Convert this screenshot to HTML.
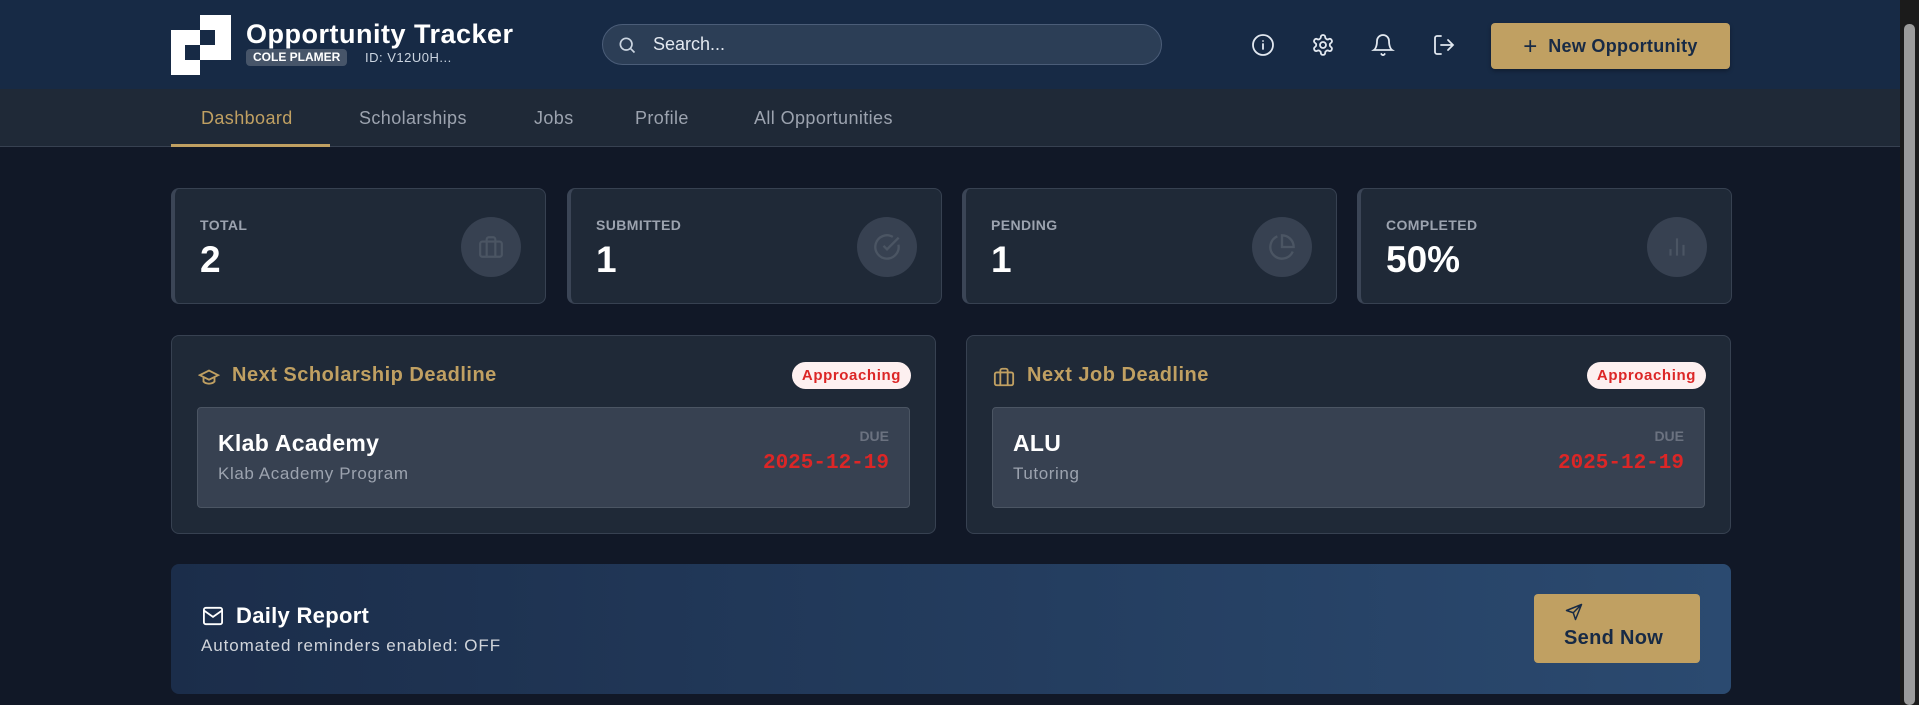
<!DOCTYPE html>
<html><head><meta charset="utf-8"><style>
*{box-sizing:border-box;margin:0;padding:0}
body{width:1919px;height:705px;overflow:hidden;background:#111827;font-family:"Liberation Sans",sans-serif;color:#fff;position:relative}
.abs{position:absolute}
.hdr{left:0;top:0;width:1900px;height:89px;background:#172a45}
.nav{left:0;top:89px;width:1900px;height:58px;background:#1f2937;border-bottom:1px solid #374151}
.sb{left:1900px;top:0;width:19px;height:705px;background:#1b1b1b}
.sb i{position:absolute;left:4px;top:24px;width:11px;height:681px;background:#9b9b9b;border-radius:5px}
.navi{top:108px;font-size:18px;color:#9ca3af;letter-spacing:.4px}
.card{background:#1f2937;border:1px solid #374151;border-radius:8px}
.stat{top:188px;width:375px;height:116px;border-left:4px solid #3b4556}
.stat .l{position:absolute;left:25px;top:28px;font-size:14px;font-weight:bold;color:#9ca3af;letter-spacing:.4px}
.stat .v{position:absolute;left:25px;top:50px;font-size:37px;font-weight:bold}
.stat .c{position:absolute;left:286px;top:28px;width:60px;height:60px;border-radius:50%;background:#374151;display:flex;align-items:center;justify-content:center}
.dl{top:335px;width:765px;height:199px}
.dl .t{position:absolute;left:60px;top:28px;font-size:20px;font-weight:bold;color:#c0a062;letter-spacing:.5px}
.dl .ic{position:absolute;left:26px;top:30px}
.badge{position:absolute;right:24px;top:26px;background:#fdf0f0;color:#dc2626;font-size:15px;font-weight:bold;padding:5px 10px;border-radius:14px;letter-spacing:.6px}
.inner{position:absolute;left:25px;top:71px;right:25px;height:101px;background:#374151;border:1px solid #4b5563;border-radius:4px}
.inner .n{position:absolute;left:20px;top:22px;font-size:23px;font-weight:bold;letter-spacing:.3px}
.inner .s{position:absolute;left:20px;top:56px;font-size:17px;color:#9ca3af;letter-spacing:.6px}
.inner .due{position:absolute;right:20px;top:20px;font-size:14px;font-weight:bold;color:#6b7280}
.inner .d{position:absolute;right:20px;top:44px;font-size:21px;font-weight:bold;color:#dc2626;font-family:"Liberation Mono",monospace}
</style></head><body>
<div class="abs hdr"></div>
<div class="abs nav"></div>
<div class="abs sb"><i></i></div>
<svg class="abs" style="left:171px;top:15px" width="60" height="60" viewBox="0 0 60 60"><path d="M29 0H60V45H29ZM0 15H29V60H0Z" fill="#fff"/><rect x="29" y="15" width="15" height="15" fill="#172a45"/><rect x="14" y="30" width="15" height="15" fill="#172a45"/></svg>
<div class="abs" style="left:246px;top:19px;font-size:27px;font-weight:bold;letter-spacing:.5px">Opportunity Tracker</div>
<div class="abs" style="left:246px;top:49px;height:17px;padding:0 7px;background:#475569;border-radius:4px;font-size:12px;font-weight:bold;line-height:17px">COLE PLAMER</div>
<div class="abs" style="left:365px;top:50px;font-size:13px;color:#cbd5e1;letter-spacing:.5px">ID: V12U0H...</div>
<div class="abs" style="left:602px;top:24px;width:560px;height:41px;border-radius:21px;background:#2c3e56;border:1px solid #4b5d78"></div>
<svg class="abs" style="left:617px;top:35px" width="20" height="20" viewBox="0 0 24 24" fill="none" stroke="#cbd5e1" stroke-width="2"><circle cx="11" cy="11" r="7"/><path d="M21 21l-5-5"/></svg>
<div class="abs" style="left:653px;top:34px;font-size:18px;color:#e2e8f0">Search...</div>
<svg class="abs" style="left:1251px;top:33px" width="24" height="24" viewBox="0 0 24 24" fill="none" stroke="#e2e8f0" stroke-width="1.8" stroke-linecap="round"><circle cx="12" cy="12" r="10"/><path d="M12 16v-5M12 8h.01"/></svg>
<svg class="abs" style="left:1311px;top:33px" width="24" height="24" viewBox="0 0 24 24" fill="none" stroke="#e2e8f0" stroke-width="1.8"><circle cx="12" cy="12" r="3"/><path d="M12.2 2h-.4a2 2 0 0 0-2 2v.2a2 2 0 0 1-1 1.7l-.4.3a2 2 0 0 1-2 0l-.2-.1a2 2 0 0 0-2.7.7l-.2.4a2 2 0 0 0 .7 2.7l.2.1a2 2 0 0 1 1 1.7v.5a2 2 0 0 1-1 1.7l-.2.1a2 2 0 0 0-.7 2.7l.2.4a2 2 0 0 0 2.7.7l.2-.1a2 2 0 0 1 2 0l.4.3a2 2 0 0 1 1 1.7v.2a2 2 0 0 0 2 2h.4a2 2 0 0 0 2-2v-.2a2 2 0 0 1 1-1.7l.4-.3a2 2 0 0 1 2 0l.2.1a2 2 0 0 0 2.7-.7l.2-.4a2 2 0 0 0-.7-2.7l-.2-.1a2 2 0 0 1-1-1.7v-.5a2 2 0 0 1 1-1.7l.2-.1a2 2 0 0 0 .7-2.7l-.2-.4a2 2 0 0 0-2.7-.7l-.2.1a2 2 0 0 1-2 0l-.4-.3a2 2 0 0 1-1-1.7V4a2 2 0 0 0-2-2z"/></svg>
<svg class="abs" style="left:1371px;top:33px" width="24" height="24" viewBox="0 0 24 24" fill="none" stroke="#e2e8f0" stroke-width="1.8" stroke-linecap="round"><path d="M6 8a6 6 0 0 1 12 0c0 7 3 9 3 9H3s3-2 3-9M10.3 21a1.9 1.9 0 0 0 3.4 0"/></svg>
<svg class="abs" style="left:1432px;top:33px" width="24" height="24" viewBox="0 0 24 24" fill="none" stroke="#e2e8f0" stroke-width="1.8" stroke-linecap="round"><path d="M9 21H5a2 2 0 0 1-2-2V5a2 2 0 0 1 2-2h4M16 17l5-5-5-5M21 12H9"/></svg>
<div class="abs" style="left:1491px;top:23px;width:239px;height:46px;background:#c0a062;border-radius:4px;box-shadow:0 2px 4px rgba(0,0,0,.3);color:#172a45;font-size:18px;font-weight:bold;line-height:46px;text-align:center;letter-spacing:.3px"><span style="font-weight:normal;font-size:24px;vertical-align:-2px">+</span>&nbsp; New Opportunity</div>
<div class="abs navi" style="left:201px;color:#c0a062">Dashboard</div>
<div class="abs navi" style="left:359px">Scholarships</div>
<div class="abs navi" style="left:534px">Jobs</div>
<div class="abs navi" style="left:635px">Profile</div>
<div class="abs navi" style="left:754px">All Opportunities</div>
<div class="abs" style="left:171px;top:144px;width:159px;height:3px;background:#c0a062"></div>

<div class="abs card stat" style="left:171px"><div class="l">TOTAL</div><div class="v">2</div><div class="c"><svg width="26" height="26" viewBox="0 0 24 24" fill="none" stroke="#4b5563" stroke-width="2"><rect x="2" y="7" width="20" height="14" rx="2"/><path d="M16 21V5a2 2 0 0 0-2-2h-4a2 2 0 0 0-2 2v16"/></svg></div></div>
<div class="abs card stat" style="left:567px"><div class="l">SUBMITTED</div><div class="v">1</div><div class="c"><svg width="28" height="28" viewBox="0 0 24 24" fill="none" stroke="#4b5563" stroke-width="2"><path d="M21.8 10A10 10 0 1 1 17 3.3"/><path d="M9 11l3 3L22 4"/></svg></div></div>
<div class="abs card stat" style="left:962px"><div class="l">PENDING</div><div class="v">1</div><div class="c"><svg width="28" height="28" viewBox="0 0 24 24" fill="none" stroke="#4b5563" stroke-width="2"><path d="M21.2 15.9A10 10 0 1 1 8 2.8"/><path d="M22 12A10 10 0 0 0 12 2v10z"/></svg></div></div>
<div class="abs card stat" style="left:1357px"><div class="l">COMPLETED</div><div class="v">50%</div><div class="c"><svg width="26" height="26" viewBox="0 0 24 24" fill="none" stroke="#4b5563" stroke-width="2"><path d="M18 20V10M12 20V4M6 20v-6"/></svg></div></div>

<div class="abs card dl" style="left:171px"><svg class="ic" width="22" height="22" viewBox="0 0 24 24" fill="none" stroke="#c0a062" stroke-width="2"><path d="M22 10L12 5 2 10l10 5 10-5zM6 12v5c3 3 9 3 12 0v-5"/></svg><div class="t">Next Scholarship Deadline</div><div class="badge">Approaching</div><div class="inner"><div class="n">Klab Academy</div><div class="s">Klab Academy Program</div><div class="due">DUE</div><div class="d">2025-12-19</div></div></div>
<div class="abs card dl" style="left:966px"><svg class="ic" width="22" height="22" viewBox="0 0 24 24" fill="none" stroke="#c0a062" stroke-width="2"><rect x="2" y="7" width="20" height="14" rx="2"/><path d="M16 21V5a2 2 0 0 0-2-2h-4a2 2 0 0 0-2 2v16"/></svg><div class="t">Next Job Deadline</div><div class="badge">Approaching</div><div class="inner"><div class="n">ALU</div><div class="s">Tutoring</div><div class="due">DUE</div><div class="d">2025-12-19</div></div></div>

<div class="abs" style="left:171px;top:564px;width:1560px;height:130px;border-radius:8px;background:linear-gradient(90deg,#1b2d4a,#2b4a70)"></div>
<svg class="abs" style="left:202px;top:606px" width="22" height="20" viewBox="0 0 24 22" fill="none" stroke="#fff" stroke-width="2"><rect x="2" y="2" width="20" height="18" rx="2"/><path d="M2 5l10 7 10-7"/></svg>
<div class="abs" style="left:236px;top:603px;font-size:22px;font-weight:bold;letter-spacing:.3px">Daily Report</div>
<div class="abs" style="left:201px;top:636px;font-size:17px;color:#d1d5db;letter-spacing:.9px">Automated reminders enabled: OFF</div>
<div class="abs" style="left:1534px;top:594px;width:166px;height:69px;background:#c0a062;border-radius:4px"></div>
<svg class="abs" style="left:1565px;top:603px" width="18" height="18" viewBox="0 0 24 24" fill="none" stroke="#172a45" stroke-width="2" stroke-linejoin="round"><path d="M22 2L2 10l9 3 3 9z M11 13l11-11"/></svg>
<div class="abs" style="left:1564px;top:627px;font-size:20px;font-weight:bold;color:#172a45;letter-spacing:.3px">Send Now</div>
</body></html>
